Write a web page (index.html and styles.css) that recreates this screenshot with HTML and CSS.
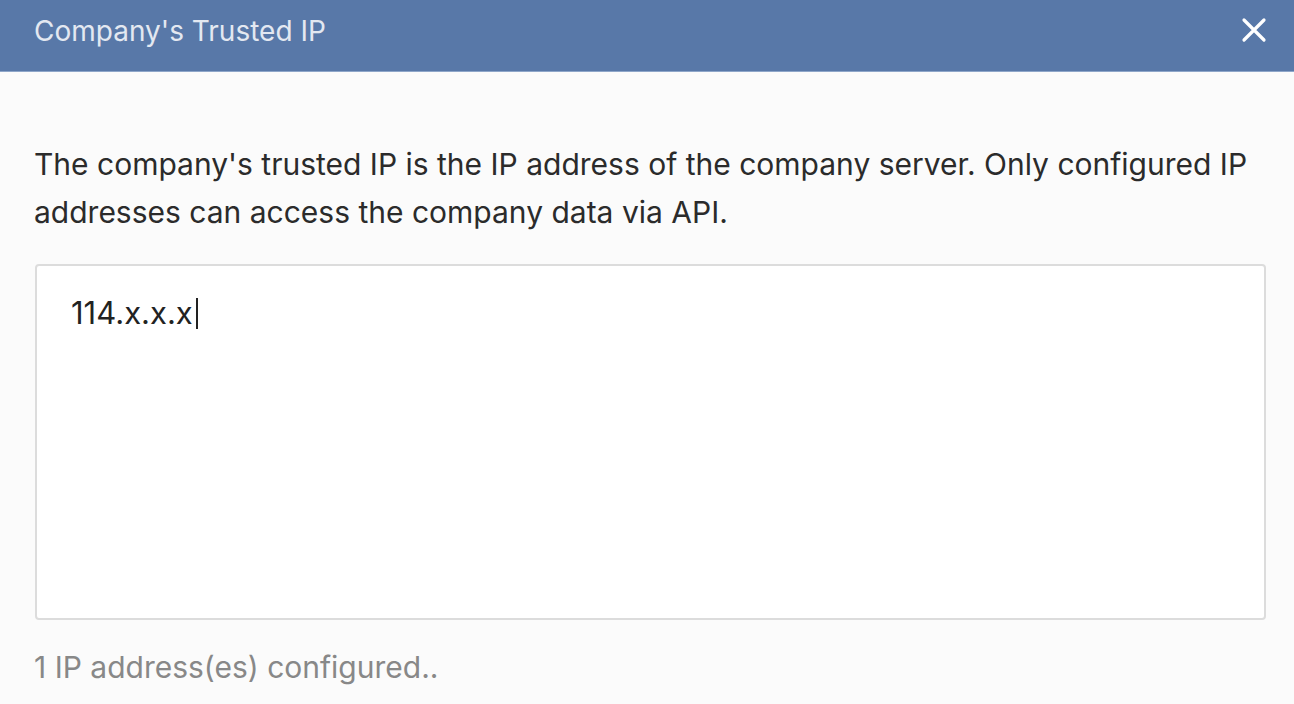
FILE: index.html
```html
<!DOCTYPE html>
<html lang="en">
<head>
<meta charset="utf-8">
<title>Company's Trusted IP</title>
<link rel="stylesheet" href="styles.css">
</head>
<body>
<div class="dialog">
  <header class="dialog-header">
    <h1 class="dialog-title">Company's Trusted IP</h1>
    <button class="close-btn" aria-label="Close">
      <svg width="26" height="26" viewBox="0 0 26 26"><path d="M3 3L23 23M23 3L3 23" stroke="#fff" stroke-width="3.2" stroke-linecap="round"/></svg>
    </button>
  </header>
  <main class="dialog-body">
    <p class="description">The company's trusted IP is the IP address of the company server. Only configured IP addresses can access the company data via API.</p>
    <div class="ip-box">
      <div class="ip-text">114.x.x.x<span class="caret"></span></div>
    </div>
    <p class="status">1 IP address(es) configured..</p>
  </main>
</div>
</body>
</html>
```

FILE: styles.css
```css
* { box-sizing: border-box; }
html, body { margin: 0; padding: 0; }
body {
  background: #fbfbfb;
  font-family: Inter, "Liberation Sans", Arial, sans-serif;
  width: 1294px;
  height: 704px;
  overflow: hidden;
}
.dialog-header {
  height: 72px;
  background: #5878a8;
  border-bottom: 1px solid #8ea6c9;
  display: flex;
  align-items: center;
  justify-content: space-between;
  padding: 0 27px 0 34px;
}
.dialog-title {
  margin: 0;
  font-weight: normal;
  font-size: 28px;
  color: #e3e8f1;
  padding-bottom: 10px;
}
.close-btn {
  background: none;
  border: 0;
  padding: 0;
  width: 26px;
  height: 26px;
  margin-bottom: 12px;
  display: flex;
}
.dialog-body {
  padding: 0 28px 0 34px;
}
.description {
  margin: 0;
  padding-top: 68px;
  font-size: 30px;
  line-height: 48px;
  color: #2b2b2b;
}
.ip-box {
  margin-top: 28px;
  margin-left: 1px;
  height: 356px;
  background: #ffffff;
  border: 2px solid #dcdcdc;
  border-radius: 4px;
  padding: 28px 34px;
}
.ip-text {
  font-size: 31px;
  color: #222;
  line-height: 38px;
  display: flex;
  align-items: center;
}
.caret {
  display: inline-block;
  width: 2px;
  height: 31px;
  background: #222;
  margin-left: 3px;
}
.status {
  margin: 0;
  padding-top: 29px;
  font-size: 30px;
  color: #888;
}
```
